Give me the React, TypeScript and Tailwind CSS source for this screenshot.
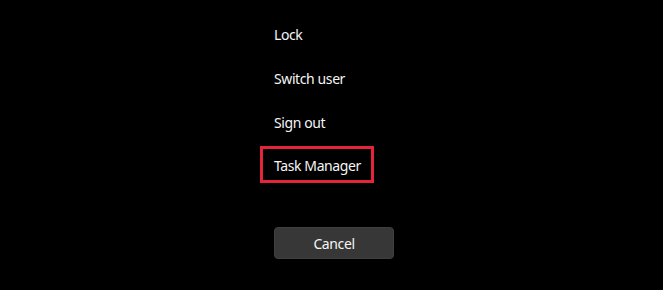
import React from "react";

export default function App() {
  const font = { fontFamily: '"Noto Sans", "Open Sans", sans-serif' };
  return (
    <div className="w-[663px] h-[290px] bg-black text-[#f5f5f5] overflow-hidden" style={font}>
      <div className="flex flex-col pt-[12px] pl-[274px] tracking-[-0.4px]">
        <div className="h-[44px] flex items-center text-[14px]">Lock</div>
        <div className="h-[44px] flex items-center text-[14px]">Switch user</div>
        <div className="h-[44px] flex items-center text-[14px]">Sign out</div>
        <div className="h-[44px] flex items-start pt-[2px]">
          <div className="-ml-[14px] w-[114px] h-[37px] border-[3px] border-[#e3243b] pl-[11px] pt-[2px] flex items-center text-[14px]">
            Task Manager
          </div>
        </div>
        <button className="mt-[39px] w-[120px] h-[32px] rounded-[4px] bg-[#373737] border border-[#3f3f3f] text-[14px] text-[#f5f5f5] flex items-center justify-center">
          Cancel
        </button>
      </div>
    </div>
  );
}
